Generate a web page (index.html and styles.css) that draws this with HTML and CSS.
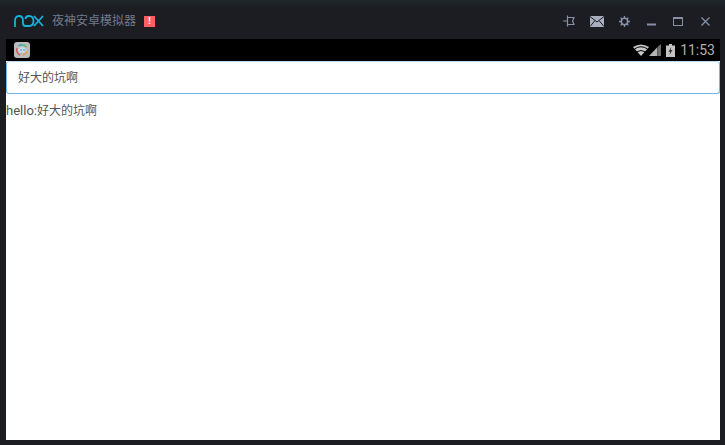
FILE: index.html
```html
<!DOCTYPE html>
<html lang="zh">
<head>
<meta charset="utf-8">
<title>夜神安卓模拟器</title>
<link rel="stylesheet" href="styles.css">
</head>
<body>
<div class="frame">
  <header class="titlebar">
    <div class="brand">
      <svg class="logo" width="30" height="12" viewBox="0 0 30 12" fill="none" stroke="#14b4da" stroke-width="1.800">
        <path d="M1 12V6Q1 1 5 1Q9 1 9 6V8Q9 11 11.500 11H15Q19.500 11 19.500 6Q19.500 1 15 1Q11.500 1 11.500 4"/>
        <path d="M20 1L29 11M29 1L20 11"/>
      </svg>
      <span class="appname">夜神安卓模拟器</span>
      <span class="alert">!</span>
    </div>
    <div class="controls">
      <svg class="ctl" width="12" height="12" viewBox="0 0 12 12" fill="none" stroke="#8790a6" stroke-width="1.200"><path d="M0 6H4M4.500 0.500V11.500M4.500 2.500H11L9.500 6L11 9.500H4.500"/></svg>
      <svg class="ctl" width="14" height="11" viewBox="0 0 14 11"><rect width="14" height="11" fill="#a8aebd"/><path d="M0 .5L7 6L14 .5M0 10.500L5 4.500M14 10.500L9 4.500" fill="none" stroke="#1c1d22" stroke-width="1"/></svg>
      <svg class="ctl" width="11" height="11" viewBox="0 0 11 11" fill="none" stroke="#8790a6"><circle cx="5.500" cy="5.500" r="3.200" stroke-width="1.600"/><path d="M5.500 0V2M5.500 9V11M0 5.500H2M9 5.500H11M1.600 1.600L3 3M8 8L9.400 9.400M9.400 1.600L8 3M3 8L1.600 9.400" stroke-width="1.300"/></svg>
      <svg class="ctl ctl-gap" width="9" height="11" viewBox="0 0 9 11"><rect y="7.500" width="9" height="2" fill="#8790a6"/></svg>
      <svg class="ctl ctl-gap" width="10" height="9" viewBox="0 0 10 9" fill="none" stroke="#8790a6"><rect x=".5" y=".5" width="9" height="8"/><path d="M0 1.500H10"/></svg>
      <svg class="ctl ctl-gap" width="10" height="9" viewBox="0 0 10 9" fill="none" stroke="#8790a6" stroke-width="1.300"><path d="M1.500 .5L9.500 8.500M9.500 .5L1.500 8.500"/></svg>
    </div>
  </header>
  <main class="screen">
    <div class="statusbar">
      <svg class="appicon" width="16" height="16" viewBox="0 0 16 16" fill="none">
        <rect width="16" height="16" rx="3" fill="#b9bcb8"/>
        <path d="M4.500 4A6 6 0 0 1 8 2.800" stroke="#3a9fd0" stroke-width="1.500"/>
        <path d="M8 2.800A6 6 0 0 1 12.500 5" stroke="#62b36b" stroke-width="1.500"/>
        <path d="M13 9.500A6 6 0 0 1 9 13" stroke="#e0a040" stroke-width="1.500"/>
        <path d="M3 6A6 6 0 0 0 6 13" stroke="#d05a5a" stroke-width="1.500"/>
        <rect x="4.500" y="5.500" width="7" height="5" rx="1.500" fill="#d8e4e8"/>
        <path d="M5.500 6.800L8 9.200M8 6.800L5.500 9.200M8.500 6.800L11 9.200M11 6.800L8.500 9.200" stroke="#3f9fc4" stroke-width=".7"/>
      </svg>
      <div class="indicators">
        <svg width="16" height="12" viewBox="0 0 16 12"><path d="M0 3Q8-2 16 3L8 12Z" fill="#c8c8c8"/><path d="M1.500 4.900Q8 .6 14.500 4.900M4 7.800Q8 5.200 12 7.800" fill="none" stroke="#000" stroke-width="1"/></svg>
        <svg class="signal" width="12" height="12" viewBox="0 0 12 12"><path d="M0 12L8.500 3V12Z" fill="#b4b4b4"/><path d="M9 2.500L12 0V12H9Z" fill="#6e6e6e"/></svg>
        <svg class="battery" width="9" height="13" viewBox="0 0 9 13"><path d="M3 0H6V1.500H9V13H0V1.500H3Z" fill="#c4c4c4"/><path d="M5.300 3L2.500 7.800H4.200L3.500 11L6.500 6H4.700Z" fill="#333"/></svg>
        <span class="clock">11:53</span>
      </div>
    </div>
    <div class="inputbar">好大的坑啊</div>
    <p class="output"><span class="latin">hello:</span>好大的坑啊</p>
  </main>
</div>
</body>
</html>
```

FILE: styles.css
```css
* {
  box-sizing: border-box;
}

html,
body {
  margin: 0;
  height: 100%;
  overflow: hidden;
}

.frame {
  width: 725px;
  height: 445px;
  display: flex;
  flex-direction: column;
  background: #1c1d22;
  font-family: "Roboto", "Noto Sans CJK SC", sans-serif;
}

.titlebar {
  height: 39px;
  flex: none;
  display: flex;
  align-items: center;
  justify-content: space-between;
  padding: 3px 15px 0 14px;
  background: linear-gradient(#20282c, #1c1d22 8px);
}

.brand {
  display: flex;
  align-items: center;
}

.logo {
  display: block;
}

.appname {
  margin-left: 8px;
  font-size: 12px;
  line-height: 16px;
  color: #6f7b8e;
}

.alert {
  width: 11px;
  height: 11px;
  margin-left: 8px;
  background: #ff5f63;
  color: #fff;
  font-size: 9px;
  font-weight: 700;
  line-height: 11px;
  text-align: center;
}

.controls {
  display: flex;
  align-items: center;
  gap: 15px;
}

.ctl {
  display: block;
}

.ctl-gap {
  margin-left: 2px;
}

.screen {
  flex: 1;
  margin: 0 5px 5px 6px;
  display: flex;
  flex-direction: column;
  background: #fff;
}

.statusbar {
  height: 22px;
  flex: none;
  display: flex;
  align-items: center;
  justify-content: space-between;
  padding: 0 5px 0 8px;
  background: #000;
}

.appicon {
  display: block;
}

.indicators {
  display: flex;
  align-items: center;
}

.battery {
  margin-left: 5px;
}

.clock {
  margin-left: 5px;
  font-size: 14px;
  line-height: 18px;
  color: #b0b0b0;
}

.inputbar {
  height: 33px;
  flex: none;
  padding-left: 11px;
  border: 1px solid #6fb6f0;
  border-top-color: #bcdcf6;
  border-radius: 3px;
  font-size: 12px;
  line-height: 33px;
  color: #555;
}

.output {
  margin: 9px 0 0;
  font-size: 12px;
  line-height: 16px;
  color: #555;
}

.latin {
  font-size: 13px;
}
```
